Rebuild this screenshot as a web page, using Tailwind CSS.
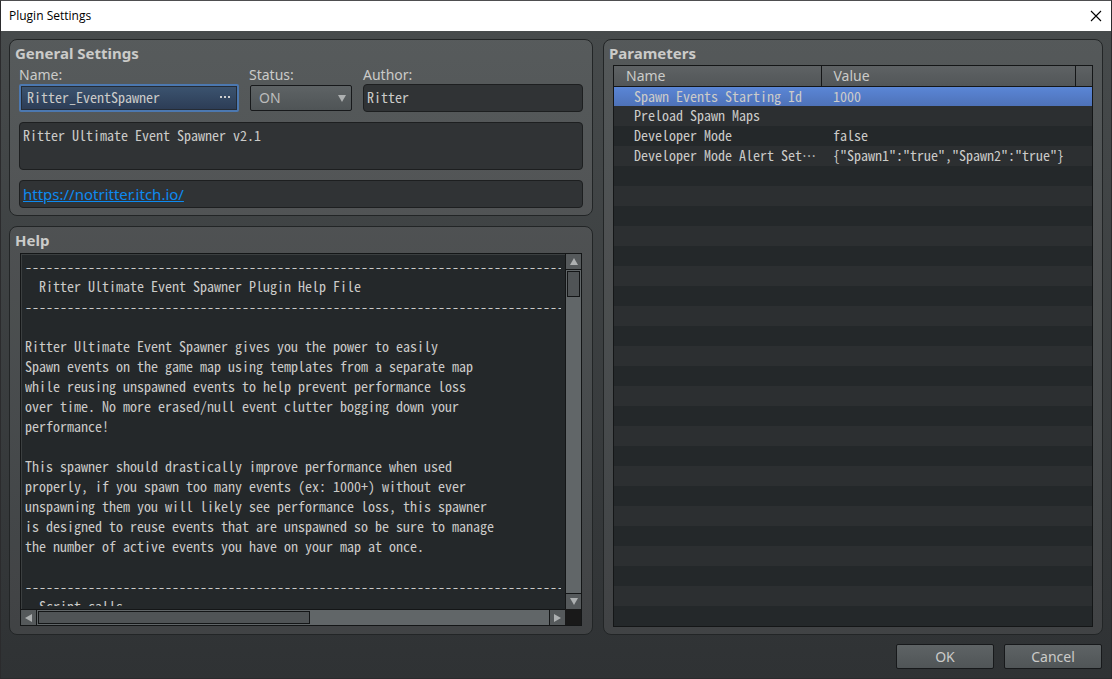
<!DOCTYPE html>
<html lang="en">
<head>
  <meta charset="UTF-8">
  <meta name="viewport" content="width=device-width, initial-scale=1.0">
  <title>Plugin Settings</title>
  <script src="https://cdn.jsdelivr.net/npm/@tailwindcss/browser@4"></script>
</head>
<body class="h-screen flex flex-col overflow-hidden border border-[#2b2b2d] border-t-[#4e4e50] bg-[#303334] font-['Noto_Sans','Open_Sans',sans-serif] text-sm text-[#cbcbc9]">
  <!-- Title bar -->
  <header class="h-[30px] shrink-0 flex items-center justify-between bg-white pl-2 pr-[7px] text-black">
    <h1 class="font-['Open_Sans',sans-serif] text-xs">Plugin Settings</h1>
    <button type="button" aria-label="Close" class="p-[2px]">
      <svg class="size-3" viewBox="0 0 12 12" fill="none" stroke="#000" stroke-width="1.1"><path d="M1 1l10 10M11 1L1 11"/></svg>
    </button>
  </header>

  <div class="flex-1 min-h-0 flex flex-col bg-linear-to-b from-[#474b4c] to-[#2f3234] px-2 pt-2">
    <main class="flex-1 min-h-0 grid grid-cols-[584fr_500fr] gap-[10px]">
      <!-- Left side -->
      <div class="min-h-0 min-w-0 flex flex-col gap-[10px]">
        <section class="rounded-lg border border-[#222526] bg-white/9 px-[9px] pt-1 pb-[7px]">
          <h2 class="-ml-1 h-5 text-[15px] leading-[18px] font-bold">General Settings</h2>
          <div class="grid grid-cols-[220fr_104fr_220fr] gap-[10px]">
            <div>
              <label for="name" class="block h-5 leading-[22px]">Name:</label>
              <button id="name" type="button" class="h-7 w-full flex items-center justify-between rounded-xs border-2 border-[#4c78b0] bg-linear-to-b from-[#3c5470] to-[#2c3c55] px-[6px] pb-[2px] font-['Noto_Sans_Mono_CJK_JP','Liberation_Mono',monospace] text-sm shadow-[inset_0_0_0_1px_#252c36]">
                <span>Ritter_EventSpawner</span>
                <svg class="w-[11px] h-[2px]" viewBox="0 0 11 2" fill="#cfcfcf"><path d="M0 0h2v2H0zM4 0h2v2H4zM8 0h2v2H8z"/></svg>
              </button>
            </div>
            <div>
              <label for="status" class="block h-5 leading-[22px]">Status:</label>
              <div class="relative p-px">
                <select id="status" class="h-[26px] w-full appearance-none rounded-xs border border-[#17191b] bg-linear-to-b from-[#5e6365] to-[#4f5456] pl-2 text-sm text-[#bcbcbc]">
                  <option>ON</option>
                  <option>OFF</option>
                </select>
                <svg class="absolute right-[7px] top-[11px] w-2 h-[7px]" viewBox="0 0 8 7" fill="#adb0b1"><path d="M0 0h8L4 7z"/></svg>
              </div>
            </div>
            <div>
              <label for="author" class="block h-5 leading-[22px]">Author:</label>
              <input id="author" readonly value="Ritter" class="block h-7 w-full rounded-sm border border-[#1d1f20] bg-[#303335] px-[3px] pb-[2px] font-['Noto_Sans_Mono_CJK_JP','Liberation_Mono',monospace] text-sm">
            </div>
          </div>
          <textarea readonly aria-label="Description" class="mt-[10px] block h-12 w-full resize-none rounded-sm border border-[#1d1f20] bg-[#303335] px-[3px] py-[2px] font-['Noto_Sans_Mono_CJK_JP','Liberation_Mono',monospace] text-sm leading-[20px]">Ritter Ultimate Event Spawner v2.1</textarea>
          <div class="mt-[10px] h-7 rounded-sm border border-[#1d1f20] bg-[#303335] px-[3px] leading-[26px]">
            <a href="https://notritter.itch.io/" class="text-[15px] text-[#0d8af0] underline">https://notritter.itch.io/</a>
          </div>
        </section>

        <section class="flex-1 min-h-0 flex flex-col rounded-lg border border-[#222526] bg-white/8 px-[10px] pt-1 pb-2">
          <h2 class="-ml-[5px] h-[22px] shrink-0 text-[15px] leading-[18px] font-bold">Help</h2>
          <div class="flex-1 min-h-0 grid grid-cols-[1fr_16px] grid-rows-[1fr_16px] border border-[#141617] bg-[#141617]">
            <div class="min-h-0 min-w-0 overflow-hidden border-l border-t border-[#3b3f40] bg-[#24282a] pt-px pl-[3px] pr-1 pb-[3px]">
              <pre class="h-full overflow-hidden font-['Noto_Sans_Mono_CJK_JP','Liberation_Mono',monospace] text-sm leading-[20px]">
-------------------------------------------------------------------------------
  Ritter Ultimate Event Spawner Plugin Help File
-------------------------------------------------------------------------------

Ritter Ultimate Event Spawner gives you the power to easily
Spawn events on the game map using templates from a separate map
while reusing unspawned events to help prevent performance loss
over time. No more erased/null event clutter bogging down your
performance!

This spawner should drastically improve performance when used
properly, if you spawn too many events (ex: 1000+) without ever
unspawning them you will likely see performance loss, this spawner
is designed to reuse events that are unspawned so be sure to manage
the number of active events you have on your map at once.

-------------------------------------------------------------------------------
  Script calls
-------------------------------------------------------------------------------</pre>
            </div>
            <!-- Vertical scrollbar -->
            <div class="min-h-0 flex flex-col gap-px border-l border-[#141617]">
              <button type="button" aria-label="Scroll up" class="size-[15px] flex items-center justify-center bg-[#55595b]">
                <svg class="w-2 h-[7px]" viewBox="0 0 8 7" fill="#adb0b1"><path d="M4 0l4 7H0z"/></svg>
              </button>
              <div class="flex-1 bg-[#616668] p-px">
                <div class="h-[26px] border border-[#141617] bg-[#505456]"></div>
              </div>
              <button type="button" aria-label="Scroll down" class="size-[15px] flex items-center justify-center bg-[#55595b]">
                <svg class="w-2 h-[7px]" viewBox="0 0 8 7" fill="#adb0b1"><path d="M0 0h8L4 7z"/></svg>
              </button>
            </div>
            <!-- Horizontal scrollbar -->
            <div class="min-w-0 flex gap-px border-t border-[#141617]">
              <button type="button" aria-label="Scroll left" class="size-[15px] flex items-center justify-center bg-[#55595b]">
                <svg class="w-[7px] h-2" viewBox="0 0 7 8" fill="#adb0b1"><path d="M7 0v8L0 4z"/></svg>
              </button>
              <div class="flex-1 bg-[#616668] p-px">
                <div class="h-[13px] w-[272px] border border-[#141617] bg-[#505456]"></div>
              </div>
              <button type="button" aria-label="Scroll right" class="size-[15px] flex items-center justify-center bg-[#55595b]">
                <svg class="w-[7px] h-2" viewBox="0 0 7 8" fill="#adb0b1"><path d="M0 0v8l7-4z"/></svg>
              </button>
            </div>
            <div class="bg-[#191919]"></div>
          </div>
        </section>
      </div>

      <!-- Right side -->
      <section class="min-h-0 min-w-0 flex flex-col rounded-lg border border-[#222526] bg-white/8 px-[9px] pt-1 pb-[7px]">
        <h2 class="-ml-1 h-[21px] shrink-0 text-[15px] leading-[18px] font-bold">Parameters</h2>
        <div class="flex-1 min-h-0 overflow-hidden border border-[#141617] bg-[repeating-linear-gradient(#2c2f31_0_20px,#24282a_20px_40px)]">
          <table class="w-full table-fixed border-collapse text-left">
            <colgroup>
              <col class="w-[207px]">
              <col>
              <col class="w-[17px]">
            </colgroup>
            <thead>
              <tr class="h-5 bg-linear-to-b from-[#5e6264] to-[#525658] leading-[19px]">
                <th class="border-r border-b border-[#141617] p-0 pl-3 font-normal">Name</th>
                <th class="border-r border-b border-[#141617] p-0 pl-3 font-normal">Value</th>
                <th class="border-b border-[#141617] p-0"></th>
              </tr>
            </thead>
            <tbody class="font-['Noto_Sans_Mono_CJK_JP','Liberation_Mono',monospace] leading-[18px] whitespace-nowrap">
              <tr class="h-5 bg-linear-to-b from-[#5b87d8] to-[#4e72b8] align-top">
                <td class="p-0 pl-5">Spawn Events Starting Id</td>
                <td class="p-0 pl-3">1000</td>
                <td class="p-0"></td>
              </tr>
              <tr class="h-5 bg-[#2c2f31] align-top">
                <td class="p-0 pl-5">Preload Spawn Maps</td>
                <td class="p-0 pl-3"></td>
                <td class="p-0"></td>
              </tr>
              <tr class="h-5 bg-[#24282a] align-top">
                <td class="p-0 pl-5">Developer Mode</td>
                <td class="p-0 pl-3">false</td>
                <td class="p-0"></td>
              </tr>
              <tr class="h-5 bg-[#2c2f31] align-top">
                <td class="p-0 pl-5" lang="ja">Developer Mode Alert Set…</td>
                <td class="p-0 pl-3">{"Spawn1":"true","Spawn2":"true"}</td>
                <td class="p-0"></td>
              </tr>
            </tbody>
          </table>
        </div>
      </section>
    </main>

    <!-- Buttons -->
    <footer class="flex justify-end gap-[10px] pt-[9px] pb-[9px] pr-px">
      <button type="button" class="h-[25px] w-[98px] rounded-xs border border-[#17191b] bg-linear-to-b from-[#5e6365] to-[#505557]">OK</button>
      <button type="button" class="h-[25px] w-[98px] rounded-xs border border-[#17191b] bg-linear-to-b from-[#5e6365] to-[#505557]">Cancel</button>
    </footer>
  </div>
</body>
</html>
